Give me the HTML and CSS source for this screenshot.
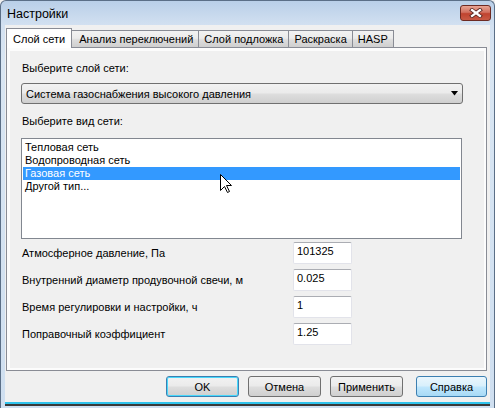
FILE: index.html
```html
<!DOCTYPE html>
<html lang="ru">
<head>
<meta charset="utf-8">
<title>Настройки</title>
<link rel="stylesheet" href="styles.css">
</head>
<body>
<div class="window">
  <div class="titlebar">
    <span class="title">Настройки</span>
    <div class="close">
      <svg width="14" height="10" viewBox="0 0 14 10">
        <path d="M3 2 L11 8 M11 2 L3 8" stroke="#5c2a24" stroke-width="4" stroke-linecap="square"/>
        <path d="M3 2 L11 8 M11 2 L3 8" stroke="#ffffff" stroke-width="2.2" stroke-linecap="square"/>
      </svg>
    </div>
  </div>
  <div class="client">
    <div class="tabs">
      <div class="tab active">Слой сети</div>
      <div class="tab">Анализ переключений</div>
      <div class="tab">Слой подложка</div>
      <div class="tab">Раскраска</div>
      <div class="tab">HASP</div>
    </div>
    <div class="panel">
      <div class="page">
        <div class="label">Выберите слой сети:</div>
        <div class="combo">
          <span>Система газоснабжения высокого давления</span>
          <svg class="arrow" width="7" height="5" viewBox="0 0 7 5"><path d="M0 0 H7 L3.5 4.5 Z" fill="#000"/></svg>
        </div>
        <div class="label label-list">Выберите вид сети:</div>
        <ul class="listbox">
          <li>Тепловая сеть</li>
          <li>Водопроводная сеть</li>
          <li class="selected">Газовая сеть</li>
          <li>Другой тип...</li>
        </ul>
        <div class="fields">
          <span class="field-label">Атмосферное давление, Па</span><span class="input">101325</span>
          <span class="field-label">Внутренний диаметр продувочной свечи, м</span><span class="input">0.025</span>
          <span class="field-label">Время регулировки и настройки, ч</span><span class="input">1</span>
          <span class="field-label">Поправочный коэффициент</span><span class="input">1.25</span>
        </div>
      </div>
    </div>
    <div class="buttons">
      <div class="btn default">OK</div>
      <div class="btn">Отмена</div>
      <div class="btn">Применить</div>
      <div class="btn hover help">Справка</div>
    </div>
  </div>
  <svg class="cursor" width="12" height="20" viewBox="0 0 12 20">
    <path d="M0.5 0.5 V16.5 L4.5 12.5 L7.5 18.5 L9.5 17.5 L6.5 11.5 H11.5 Z" fill="#fff" stroke="#000" stroke-width="1" stroke-linejoin="miter"/>
  </svg>
</div>
</body>
</html>
```

FILE: styles.css
```css
html, body {
  margin: 0;
  padding: 0;
  background: #f0f0f0;
}

body {
  font-family: "Liberation Sans", Arial, sans-serif;
  font-size: 11px;
  color: #000;
}

.window {
  position: relative;
  width: 495px;
  height: 408px;
  box-sizing: border-box;
  border: 1px solid #5b6f87;
  border-bottom: none;
  border-radius: 6px 6px 0 0;
  background: linear-gradient(#b9cfe8, #d3e1f1 25px, #d9e6f3 60px, #cfdff0);
  display: flex;
  flex-direction: column;
  overflow: hidden;
}

.titlebar {
  height: 24px;
  display: flex;
  align-items: flex-start;
  justify-content: space-between;
  padding: 0 3px 0 6px;
}

.title {
  font-size: 12.5px;
  margin-top: 6px;
  color: #000;
}

.close {
  margin-top: 4px;
  width: 29px;
  height: 14px;
  border: 1px solid #6d2a22;
  border-radius: 3px;
  background: linear-gradient(#e8a493, #d1705f 45%, #c0432f 55%, #c85a45);
  display: flex;
  align-items: center;
  justify-content: center;
}

.client {
  flex: 1;
  margin: 0 4px 4px 4px;
  background: #f0f0f0;
  padding: 3px 3px 5px 1px;
  display: flex;
  flex-direction: column;
  border-bottom: 2px solid #2ec3ec;
  box-shadow: 0 2px 0 #3a3a3a;
}

.tabs {
  display: flex;
  align-items: flex-end;
  height: 20px;
  margin-bottom: -1px;
  position: relative;
  z-index: 1;
}

.tab {
  height: 15px;
  margin-bottom: 1px;
  padding: 1px 5px 0;
  border: 1px solid #898c95;
  border-bottom: none;
  margin-left: -1px;
  background: linear-gradient(#f2f2f2, #ebebeb 45%, #dddddd 55%, #cfcfcf);
  line-height: 14px;
  white-space: nowrap;
}

.tab.active {
  height: 19px;
  margin-left: 0;
  margin-bottom: 0;
  padding: 0 6px;
  background: #ffffff;
  line-height: 20px;
  position: relative;
  z-index: 2;
}

.tab.active + .tab {
  margin-left: 0;
  border-left: none;
  padding-left: 7px;
}

.panel {
  flex: 1;
  border: 1px solid #898c95;
  background: #fcfcfc;
  padding: 3px 2px 2px 3px;
  display: flex;
}

.page {
  flex: 1;
  background: #f0f0f0;
  padding: 11px 0 0 11px;
}

.label {
  padding-left: 1px;
  line-height: 13px;
  height: 13px;
}

.combo {
  margin-top: 8px;
  height: 19px;
  width: 436px;
  border: 1px solid #707070;
  border-radius: 3px;
  background: linear-gradient(#f2f2f2, #ebebeb 45%, #dddddd 55%, #cfcfcf);
  display: flex;
  align-items: center;
  justify-content: space-between;
  padding: 0 0 0 4px;
}

.combo .arrow {
  margin-right: 4px;
}

.label-list {
  margin-top: 11px;
}

.listbox {
  list-style: none;
  margin: 10px 0 0 0;
  padding: 2px 1px;
  width: 437px;
  height: 95px;
  border: 1px solid #828790;
  background: #ffffff;
}

.listbox li {
  height: 13px;
  line-height: 13px;
  padding-left: 2px;
}

.listbox li.selected {
  background: #3399ff;
  color: #ffffff;
}

.fields {
  margin-top: 3px;
  display: grid;
  grid-template-columns: 272px 59px;
  grid-auto-rows: 22px;
  row-gap: 5px;
  align-items: center;
}

.field-label {
  padding-left: 1px;
}

.input {
  box-sizing: border-box;
  height: 22px;
  border: 1px solid #e2e3ea;
  border-top-color: #abadb3;
  border-radius: 2px;
  background: #ffffff;
  padding: 2px 0 0 3px;
  line-height: 13px;
}

.buttons {
  margin-top: 5px;
  display: flex;
  justify-content: flex-end;
  gap: 9px;
}

.btn {
  box-sizing: border-box;
  width: 73px;
  height: 21px;
  border: 1px solid #707070;
  border-radius: 3px;
  background: linear-gradient(#f2f2f2, #ebebeb 45%, #dddddd 55%, #cfcfcf);
  display: flex;
  align-items: center;
  justify-content: center;
}

.btn.default {
  border-color: #3c7fb1;
  box-shadow: inset 0 0 0 1px #48d8fb;
}

.btn.hover {
  border-color: #3c7fb1;
  background: linear-gradient(#eaf6fd, #d9f0fc 45%, #bee6fd 55%, #a7d9f5);
}

.btn.help {
  margin-left: 4px;
  width: 71px;
}

.cursor {
  position: absolute;
  left: 219px;
  top: 173px;
}
```
